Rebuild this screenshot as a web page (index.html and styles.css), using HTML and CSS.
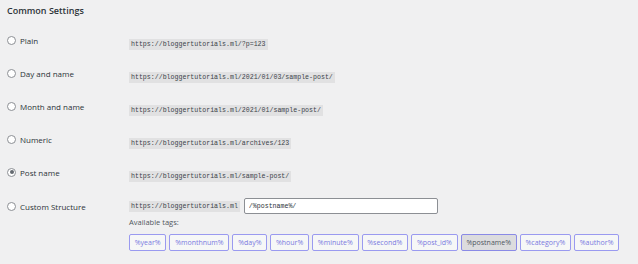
FILE: index.html
```html
<!DOCTYPE html>
<html lang="en">
<head>
  <meta charset="UTF-8" />
  <title>Permalink Settings</title>
  <link rel="stylesheet" href="styles.css">
</head>
<body>
  <div class="settings">
    <h2 class="title">Common Settings</h2>

    <div class="row">
      <label class="choice"><span class="radio"></span>Plain</label>
      <div><code>https://bloggertutorials.ml/?p=123</code></div>
    </div>
    <div class="row">
      <label class="choice"><span class="radio"></span>Day and name</label>
      <div><code>https://bloggertutorials.ml/2021/01/03/sample-post/</code></div>
    </div>
    <div class="row">
      <label class="choice"><span class="radio"></span>Month and name</label>
      <div><code>https://bloggertutorials.ml/2021/01/sample-post/</code></div>
    </div>
    <div class="row">
      <label class="choice"><span class="radio"></span>Numeric</label>
      <div><code>https://bloggertutorials.ml/archives/123</code></div>
    </div>
    <div class="row">
      <label class="choice"><span class="radio checked"></span>Post name</label>
      <div><code>https://bloggertutorials.ml/sample-post/</code></div>
    </div>
    <div class="row custom">
      <label class="choice"><span class="radio"></span>Custom Structure</label>
      <div>
        <div class="structure">
          <code>https://bloggertutorials.ml</code>
          <input type="text" class="structure-input" value="/%postname%/" />
        </div>
        <p class="tags-label">Available tags:</p>
        <div class="tags">
          <button class="tag">%year%</button>
          <button class="tag">%monthnum%</button>
          <button class="tag">%day%</button>
          <button class="tag">%hour%</button>
          <button class="tag">%minute%</button>
          <button class="tag">%second%</button>
          <button class="tag">%post_id%</button>
          <button class="tag active">%postname%</button>
          <button class="tag">%category%</button>
          <button class="tag">%author%</button>
        </div>
      </div>
    </div>
  </div>
</body>
</html>
```

FILE: styles.css
```css
body {
  margin: 0;
  background: #f0f0f1;
  font-family: "Open Sans", "Noto Sans", sans-serif;
  color: #1d2327;
}
.settings {
  padding: 0 7px;
}
.title {
  margin: 0;
  height: 23.5px;
  line-height: 21px;
  font-size: 9px;
  font-weight: 600;
  color: #2c3338;
}
.row {
  display: grid;
  grid-template-columns: 122px 1fr;
  align-items: center;
  height: 33px;
}
.choice {
  display: flex;
  align-items: center;
  gap: 4px;
  font-size: 8px;
  color: #2c3338;
}
.radio {
  box-sizing: border-box;
  width: 9px;
  height: 9px;
  border: 1px solid #8c8f94;
  border-radius: 50%;
  background: #fff;
  display: flex;
  align-items: center;
  justify-content: center;
}
.radio.checked::after {
  content: "";
  width: 4px;
  height: 4px;
  border-radius: 50%;
  background: #646970;
}
code {
  display: inline-block;
  font-family: "Liberation Mono", "DejaVu Sans Mono", monospace;
  font-size: 6.6px;
  line-height: 11px;
  padding: 0 2px;
  background: #e1e1e2;
  color: #3c434a;
}
.custom {
  height: auto;
  align-items: start;
  padding-top: 9.5px;
}
.custom .choice {
  height: 16px;
}
.structure {
  display: flex;
  align-items: center;
  gap: 4px;
  height: 16px;
}
.structure-input {
  box-sizing: border-box;
  width: 194px;
  height: 16px;
  margin: 0;
  padding: 0 4px;
  border: 1px solid #8c8f94;
  border-radius: 2px;
  background: #fff;
  font-family: "Liberation Mono", "DejaVu Sans Mono", monospace;
  font-size: 6.6px;
  color: #2c3338;
}
.tags-label {
  margin: 3px 0 0;
  font-size: 7.5px;
  line-height: 11px;
  color: #50575e;
}
.tags {
  display: flex;
  gap: 3px;
  margin-top: 6px;
}
.tag {
  height: 17px;
  margin: 0;
  padding: 0 4.8px;
  border: 1px solid #9a9af0;
  border-radius: 2px;
  background: #f6f7f7;
  color: #7a7ae0;
  font-family: "Open Sans", "Noto Sans", sans-serif;
  font-size: 7px;
}
.tag.active {
  background: #dcdcde;
  border-color: #8a8ae6;
  color: #50575e;
}
```
